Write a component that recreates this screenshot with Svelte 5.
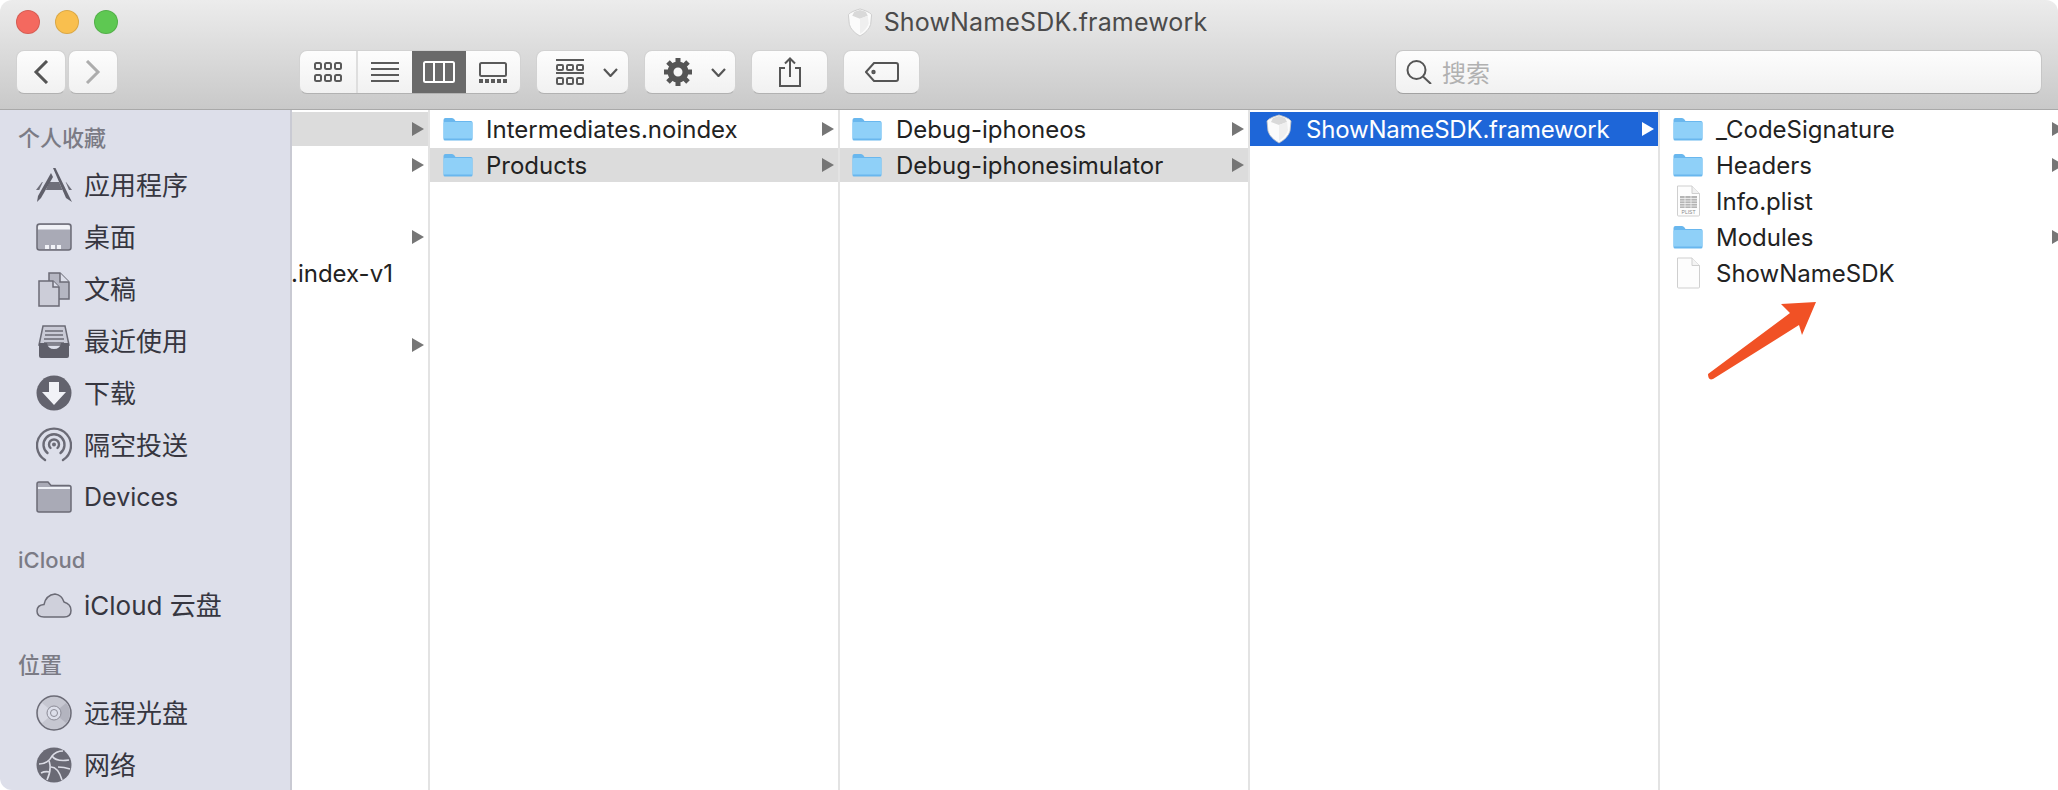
<script>
  const favorites = [
    { icon: "apps", label: "应用程序" },
    { icon: "desktop", label: "桌面" },
    { icon: "docs", label: "文稿" },
    { icon: "recents", label: "最近使用" },
    { icon: "download", label: "下载" },
    { icon: "airdrop", label: "隔空投送" },
    { icon: "folder", label: "Devices" },
  ];
  const cloud = [{ icon: "cloud", label: "iCloud 云盘" }];
  const places = [
    { icon: "disc", label: "远程光盘" },
    { icon: "globe", label: "网络" },
  ];
  const sections = [
    { title: "个人收藏", items: favorites },
    { title: "iCloud", items: cloud },
    { title: "位置", items: places },
  ];

  const isCjk = (s) => /[\u4e00-\u9fff]/.test(s);

  const firstCol = [
    { arrow: true, active: true },
    { arrow: true },
    {},
    { arrow: true },
    { name: ".index-v1" },
    {},
    { arrow: true },
  ];
  const columns = [
    {
      cls: "c2",
      rows: [
        { icon: "folder", name: "Intermediates.noindex", arrow: true },
        { icon: "folder", name: "Products", arrow: true, active: true },
      ],
    },
    {
      cls: "c3",
      rows: [
        { icon: "folder", name: "Debug-iphoneos", arrow: true },
        { icon: "folder", name: "Debug-iphonesimulator", arrow: true, active: true },
      ],
    },
    {
      cls: "c4",
      rows: [{ icon: "shield", name: "ShowNameSDK.framework", arrow: true, selected: true }],
    },
    {
      cls: "c5",
      rows: [
        { icon: "folder", name: "_CodeSignature", arrow: true },
        { icon: "folder", name: "Headers", arrow: true },
        { icon: "plist", name: "Info.plist" },
        { icon: "folder", name: "Modules", arrow: true },
        { icon: "file", name: "ShowNameSDK" },
      ],
    },
  ];
</script>

{#snippet shield(w, h)}
  <svg width={w} height={h} viewBox="0 0 30 30">
    <path d="M15 1 L21 3 L25 5 L27 7 L26 17 Q24 24 15 29 Q6 24 4 17 L3 7 L5 5 L9 3 Z" fill="#fbfbfb" stroke="#c4c4c4" stroke-width="0.8" />
    <path d="M9 4 L15 2 L21 4 L23 8 L15 11 L7 8 Z" fill="#d9d9d9" />
    <path d="M15 11 L23 8 L24 16 Q22 22 15 27 Z" fill="#efefef" />
  </svg>
{/snippet}

{#snippet fileIcon(name)}
  {#if name === "folder"}
    <svg class="ficon" width="30" height="24" viewBox="0 0 30 24">
      <path d="M0.5 3 Q0.5 1 2.5 1 H9 Q10.5 1 11.5 2.5 L12.5 4 H28 Q29.5 4 29.5 5.5 V22 Q29.5 23.5 28 23.5 H2 Q0.5 23.5 0.5 22 Z" fill="#69b7ee" />
      <path d="M0.5 6.5 Q0.5 5 2 5 H28 Q29.5 5 29.5 6.5 V21.5 H0.5 Z" fill="#8fd0f8" />
    </svg>
  {:else if name === "shield"}
    {@render shield(30, 30)}
  {:else if name === "plist"}
    <svg class="ficon" width="30" height="32" viewBox="0 0 30 32">
      <path d="M4.5 1 H19 L26.5 8.5 V30 Q26.5 31 25.5 31 H5.5 Q4.5 31 4.5 30 Z" fill="#fdfdfd" stroke="#cfcfcf" />
      <path d="M19 1 V8.5 H26.5" fill="#f1f1f1" stroke="#cfcfcf" />
      <rect x="7" y="11" width="17" height="12" fill="#b5b5b5" />
      <path d="M7 13.5h17M7 16h17M7 18.500h17M7 21h17M12 11v12M18 11v12" stroke="#f2f2f2" stroke-width="0.8" />
      <text x="15.500" y="29" class="plist">PLIST</text>
    </svg>
  {:else}
    <svg class="ficon" width="30" height="32" viewBox="0 0 30 32">
      <path d="M4.5 1 H19 L26.5 8.5 V30 Q26.5 31 25.5 31 H5.5 Q4.5 31 4.5 30 Z" fill="#fdfdfd" stroke="#cfcfcf" />
      <path d="M19 1 V8.5 H26.5" fill="#f4f4f4" stroke="#cfcfcf" />
    </svg>
  {/if}
{/snippet}

{#snippet sideIcon(name)}
  <svg width="36" height="36" viewBox="0 0 36 36">
    {#if name === "apps"}
      <path d="M6 15 H30 L36 23 H0 Z" fill="#6f6f7a" />
      <path d="M14.500 9 H21.500 L24 15 H12 Z" fill="#dddfea" />
      <path d="M21 2 L33 31" stroke="#dddfea" stroke-width="6" />
      <path d="M15 4 L3 31" stroke="#dddfea" stroke-width="6" />
      <path d="M17 1 L19.500 1 L33 29 L36 35 L30 31 Z" fill="#5f5f6a" />
      <path d="M15 6 L17 10 L5 31 L1 35 L2 29 Z" fill="#5f5f6a" />
    {:else if name === "desktop"}
      <rect x="1" y="5" width="34" height="26" rx="2.500" fill="#a9aab6" stroke="#6b6b76" stroke-width="1.500" />
      <path d="M2 10.500 V8 Q2 6 4 6 H32 Q34 6 34 8 V10.500 Z" fill="#f1f2f7" />
      <path d="M9 26h4v4H9zM15 26h4v4h-4zM21 26h4v4h-4z" fill="#f1f2f7" />
    {:else if name === "docs"}
      <path d="M13 2 H24 L33 11 V28 H13 Z" fill="#b5b6c2" stroke="#6b6b76" stroke-width="1.500" />
      <path d="M24 2 V11 H33" fill="#dddfea" stroke="#6b6b76" stroke-width="1.500" />
      <path d="M3 10 H17 L23 16 V35 H3 Z" fill="#cccdd8" stroke="#6b6b76" stroke-width="1.500" />
      <path d="M17 10 V16 H23" fill="#dddfea" stroke="#6b6b76" stroke-width="1.500" />
    {:else if name === "recents"}
      <path d="M7 3 H29 L33 22 H3 Z" fill="#c9cad6" stroke="#6b6b76" stroke-width="1.500" />
      <path d="M9 8h18M9 12h18M8 16h20M8 20h20" stroke="#6b6b76" stroke-width="1.500" />
      <path d="M3 20 H11 Q12 26 18 26 Q24 26 25 20 H33 V33 Q33 35 31 35 H5 Q3 35 3 33 Z" fill="#5f5f6a" />
    {:else if name === "download"}
      <circle cx="18" cy="18" r="17.500" fill="#63636e" />
      <path d="M13 7 H23 V17 H30 L18 30 L6 17 H13 Z" fill="#f1f2f7" />
    {:else if name === "airdrop"}
      <g fill="none" stroke="#6b6b76" stroke-width="2.400" stroke-linecap="round">
        <path d="M9 33 A17 17 0 1 1 27 33" />
        <path d="M11.500 26 A10.500 10.500 0 1 1 24.500 26" />
        <path d="M14.500 21 A5 5 0 1 1 21.500 21" />
      </g>
      <circle cx="18" cy="17.500" r="2" fill="#6b6b76" />
    {:else if name === "folder"}
      <path d="M1 5 Q1 3 3 3 H12 L15 6.500 H33 Q35 6.500 35 8.500 V31 Q35 33 33 33 H3 Q1 33 1 31 Z" fill="#a9aab6" stroke="#6b6b76" stroke-width="1.500" />
      <path d="M2 9 H34" stroke="#eef0f6" stroke-width="2" />
    {:else if name === "cloud"}
      <path d="M8 30 Q1 30 1 24 Q1 18 8 17.500 Q10 8 19 7 Q26 8 28 15 Q35 17 35 23.500 Q35 30 28 30 Z" fill="#cfd0db" stroke="#6b6b76" stroke-width="1.500" />
    {:else if name === "disc"}
      <circle cx="18" cy="18" r="17" fill="#c6c7d1" stroke="#6b6b76" stroke-width="1.500" />
      <path d="M18 18 L6 8 A15 15 0 0 0 6 28 Z" fill="#d7d8e2" />
      <path d="M18 18 L30 28 A15 15 0 0 0 30 8 Z" fill="#b3b4bf" />
      <circle cx="18" cy="18" r="7" fill="#dddfea" stroke="#8b8b96" />
      <circle cx="18" cy="18" r="3.500" fill="#dddfea" stroke="#8b8b96" />
    {:else if name === "globe"}
      <circle cx="18" cy="18" r="17.500" fill="#6a6a75" />
      <g fill="none" stroke="#dcdde6" stroke-width="1.600">
        <path d="M3 17 Q12 17 16 9 Q20 4 27 4" />
        <path d="M16 9 Q20 15 33 13" />
        <path d="M13 14 Q16 22 11 33" />
        <path d="M15 20 Q22 20 26 33" />
        <path d="M22 20 Q28 20 34 22" />
        <path d="M5 26 Q9 24 14 25" />
      </g>
    {/if}
  </svg>
{/snippet}

{#snippet chevron()}
  <svg class="chev" width="15" height="9" viewBox="0 0 15 9">
    <path d="M1 1 L7.500 8 L14 1" fill="none" stroke="#555" stroke-width="2.200" />
  </svg>
{/snippet}

<div class="window">
  <header class="chrome">
    <div class="titlebar">
      <div class="lights">
        <span class="light red"></span>
        <span class="light yellow"></span>
        <span class="light green"></span>
      </div>
      <div class="title">
        {@render shield(30, 29)}
        <span>ShowNameSDK.framework</span>
      </div>
    </div>

    <div class="toolbar">
      <div class="nav">
        <button class="btn nav-btn" aria-label="back">
          <svg width="16" height="24" viewBox="0 0 16 24"><path d="M14 1 L3 12 L14 23" fill="none" stroke="#555" stroke-width="3" /></svg>
        </button>
        <button class="btn nav-btn" aria-label="forward">
          <svg width="16" height="24" viewBox="0 0 16 24"><path d="M2 1 L13 12 L2 23" fill="none" stroke="#adadad" stroke-width="3" /></svg>
        </button>
      </div>

      <div class="btn segs">
        <div class="seg first">
          <svg width="28" height="20" viewBox="0 0 28 20" fill="none" stroke="#5a5a5a" stroke-width="2">
            <rect x="1" y="1" width="6" height="6" rx="1.500" /><rect x="11" y="1" width="6" height="6" rx="1.500" /><rect x="21" y="1" width="6" height="6" rx="1.500" />
            <rect x="1" y="13" width="6" height="6" rx="1.500" /><rect x="11" y="13" width="6" height="6" rx="1.500" /><rect x="21" y="13" width="6" height="6" rx="1.500" />
          </svg>
        </div>
        <div class="seg">
          <svg width="28" height="20" viewBox="0 0 28 20"><path d="M0 1h28M0 7h28M0 13h28M0 19h28" stroke="#5a5a5a" stroke-width="2" /></svg>
        </div>
        <div class="seg on">
          <svg width="32" height="22" viewBox="0 0 32 22" fill="none" stroke="#fff" stroke-width="2"><rect x="1" y="1" width="30" height="20" rx="1.500" /><path d="M11 1v20M21 1v20" /></svg>
        </div>
        <div class="seg">
          <svg width="28" height="21" viewBox="0 0 28 21">
            <rect x="1" y="1" width="26" height="13" rx="1.500" fill="none" stroke="#5a5a5a" stroke-width="2" />
            <path d="M0 17h4v4H0zM6 17h4v4H6zM12 17h4v4h-4zM18 17h4v4h-4zM24 17h4v4h-4z" fill="#5a5a5a" />
          </svg>
        </div>
      </div>

      <button class="btn arrange" aria-label="arrange">
        <svg width="28" height="26" viewBox="0 0 28 26" fill="none" stroke="#5a5a5a" stroke-width="2">
          <path d="M0 1h28M0 14h28" />
          <rect x="1" y="6" width="6" height="5" rx="1" /><rect x="11" y="6" width="6" height="5" rx="1" /><rect x="21" y="6" width="6" height="5" rx="1" />
          <rect x="1" y="19" width="6" height="6" rx="1" /><rect x="11" y="19" width="6" height="6" rx="1" /><rect x="21" y="19" width="6" height="6" rx="1" />
        </svg>
        {@render chevron()}
      </button>

      <button class="btn arrange" aria-label="action">
        <svg width="28" height="28" viewBox="0 0 28 28">
          <circle cx="14" cy="14" r="7.500" fill="none" stroke="#555" stroke-width="6" />
          <g stroke="#555" stroke-width="5">
            <path d="M14 0v5M14 23v5M0 14h5M23 14h5M4 4l3.500 3.500M20.500 20.500L24 24M4 24l3.500-3.500M20.500 7.500L24 4" />
          </g>
        </svg>
        {@render chevron()}
      </button>

      <button class="btn icon-btn" aria-label="share">
        <svg width="22" height="30" viewBox="0 0 22 30" fill="none" stroke="#555" stroke-width="2">
          <path d="M6 11 H1 V29 H21 V11 H16" />
          <path d="M11 20 V1.500 M6 6.500 L11 1.500 L16 6.500" />
        </svg>
      </button>

      <button class="btn icon-btn" aria-label="tag">
        <svg width="34" height="20" viewBox="0 0 34 20" fill="none" stroke="#555" stroke-width="2">
          <path d="M9 1 H31 Q33 1 33 3 V17 Q33 19 31 19 H9 L1 10 Z" />
          <circle cx="8.500" cy="10" r="1.200" />
        </svg>
      </button>

      <div class="btn search">
        <svg width="26" height="24" viewBox="0 0 26 24" fill="none" stroke="#555" stroke-width="2">
          <circle cx="10.500" cy="10" r="9" /><path d="M17 16.500 L25 24" />
        </svg>
        <span>搜索</span>
      </div>
    </div>
  </header>

  <div class="body">
    <aside class="sidebar">
      {#each sections as section}
        <section class="section">
          <h4><span class:cjk={isCjk(section.title)}>{section.title}</span></h4>
          {#each section.items as item}
            <div class="side-item">
              {@render sideIcon(item.icon)}
              <span class:cjk={isCjk(item.label)}>{item.label}</span>
            </div>
          {/each}
        </section>
      {/each}
    </aside>

    <div class="col c1">
      {#each firstCol as row}
        <div class="row" class:active={row.active}>
          {#if row.name}<span class="clipped">{row.name}</span>{/if}
          {#if row.arrow}<i class="arrow"></i>{/if}
        </div>
      {/each}
    </div>

    {#each columns as col}
      <div class="col {col.cls}">
        {#each col.rows as row}
          <div class="row" class:active={row.active} class:selected={row.selected}>
            <span class="icon-box">{@render fileIcon(row.icon)}</span>
            <span>{row.name}</span>
            {#if row.arrow}<i class="arrow"></i>{/if}
          </div>
        {/each}
      </div>
    {/each}
  </div>

  <svg class="pointer" width="125" height="90" viewBox="1700 295 125 90">
    <path d="M1708 374 L1790 313 L1781 304 L1816 302 L1802 335 L1799 325 L1713 379 Q1708 381 1708 374 Z" fill="#f15125" />
  </svg>
</div>

<style>
  :global(body) {
    margin: 0;
    background: #fff;
  }

  .window {
    position: relative;
    width: 2058px;
    height: 790px;
    overflow: hidden;
    border-radius: 12px;
    font-family: Inter, "Noto Sans CJK SC", sans-serif;
    color: #222;
    background: #fff;
  }

  .chrome {
    height: 109px;
    border-bottom: 1px solid #a9a9a9;
    background: linear-gradient(#ececec, #c9c9c9);
  }

  .titlebar {
    height: 44px;
    display: grid;
    grid-template-columns: 1fr auto 1fr;
    align-items: center;
    padding: 0 22px 0 16px;
  }

  .lights {
    display: flex;
    gap: 16px;
  }
  .light {
    width: 24px;
    height: 24px;
    margin-right: -1px;
    border-radius: 50%;
    border: 1px solid rgba(0, 0, 0, 0.12);
    box-sizing: border-box;
  }
  .red { background: #f4695f; }
  .yellow { background: #f9bf4e; }
  .green { background: #5ec852; }

  .title {
    display: flex;
    align-items: center;
    gap: 9px;
    font-size: 25px;
    color: #4b4b4b;
    letter-spacing: 0.15px;
  }

  .toolbar {
    display: flex;
    gap: 15px;
    margin-top: 6px;
    padding: 0 16px;
    height: 44px;
  }

  .nav {
    display: flex;
    gap: 2px;
    margin-right: 166px;
  }

  .btn {
    box-sizing: border-box;
    height: 44px;
    padding: 0;
    display: flex;
    align-items: center;
    justify-content: center;
    border: 1px solid #d2d2d2;
    border-bottom-color: #b2b2b2;
    border-radius: 8px;
    background: linear-gradient(#fdfdfd, #f1f1f1);
  }

  .nav-btn {
    width: 50px;
  }

  .segs {
    width: 222px;
    overflow: hidden;
    align-items: stretch;
  }
  .seg {
    flex: 1;
    display: flex;
    align-items: center;
    justify-content: center;
  }
  .seg.first {
    flex: none;
    box-sizing: border-box;
    width: 58px;
    border-right: 2px solid #dedede;
  }
  .seg.on {
    background: #6a6a6a;
  }

  .arrange {
    width: 92.5px;
    justify-content: flex-start;
    padding-left: 19px;
    gap: 19px;
  }

  .icon-btn {
    width: 77px;
  }

  .search {
    margin-left: auto;
    width: 647px;
    justify-content: flex-start;
    padding-left: 10px;
    gap: 10px;
    border-color: #c6c6c6;
    border-bottom-color: #a2a2a2;
    font-size: 24px;
    color: #b1b1b1;
  }
  .search span {
    margin-bottom: 2px;
  }

  .body {
    display: flex;
    height: 680px;
  }

  .sidebar {
    box-sizing: border-box;
    width: 292px;
    flex: none;
    padding-top: 9px;
    border-right: 2px solid #c9cad3;
    background: #dddfea;
    overflow: hidden;
  }

  .section {
    margin-bottom: 18px;
  }

  h4 {
    margin: 0;
    height: 38px;
    line-height: 38px;
    padding-left: 18px;
    font-size: 22px;
    font-weight: 500;
    color: #7b7b85;
  }
  .section:first-child h4 {
    margin-bottom: 2px;
  }
  h4 .cjk {
    display: inline-block;
    font-size: 22px;
    margin-top: -3px;
    vertical-align: top;
  }
  .section:first-child h4 .cjk {
    margin-top: 0;
  }

  .side-item {
    height: 52px;
    display: flex;
    align-items: center;
    padding-left: 36px;
    gap: 12px;
    font-size: 25px;
    color: #363640;
  }
  .side-item .cjk {
    font-size: 26px;
    margin-bottom: 3px;
  }

  .col {
    box-sizing: border-box;
    flex: none;
    display: flex;
    flex-direction: column;
    gap: 2px;
    padding-top: 2px;
    border-right: 2px solid #e3e3e3;
    overflow: hidden;
  }
  .c1 { width: 138px; }
  .c2 { width: 410px; }
  .c3 { width: 410px; }
  .c4 { width: 410px; }
  .c5 { width: 398px; border-right: 0; }

  .row {
    height: 34px;
    flex: none;
    display: flex;
    align-items: center;
    padding-left: 13px;
    gap: 13px;
    font-size: 24px;
    white-space: nowrap;
  }
  .c2 .row { padding-left: 13px; gap: 13px; }
  .c3 .row { padding-left: 12px; gap: 14px; }
  .c4 .row { padding-left: 14px; gap: 12px; }
  .c1 .row { padding-left: 0; }
  .active { background: #dcdcdc; }
  .selected { background: #1e66d8; color: #fff; letter-spacing: -0.2px; }

  .icon-box {
    width: 30px;
    height: 32px;
    display: flex;
    align-items: center;
    justify-content: center;
  }

  .arrow {
    margin-left: auto;
    margin-right: 4px;
    width: 0;
    height: 0;
    border-left: 12px solid #767676;
    border-top: 7px solid transparent;
    border-bottom: 7px solid transparent;
  }
  .selected .arrow { border-left-color: #fff; }
  .c5 .arrow { margin-right: -6px; }

  .clipped { margin-left: -1px; }

  .plist {
    font-size: 5px;
    font-family: "Liberation Sans", sans-serif;
    text-anchor: middle;
    fill: #8a8a8a;
  }

  .pointer {
    position: absolute;
    left: 1700px;
    top: 295px;
  }
</style>
